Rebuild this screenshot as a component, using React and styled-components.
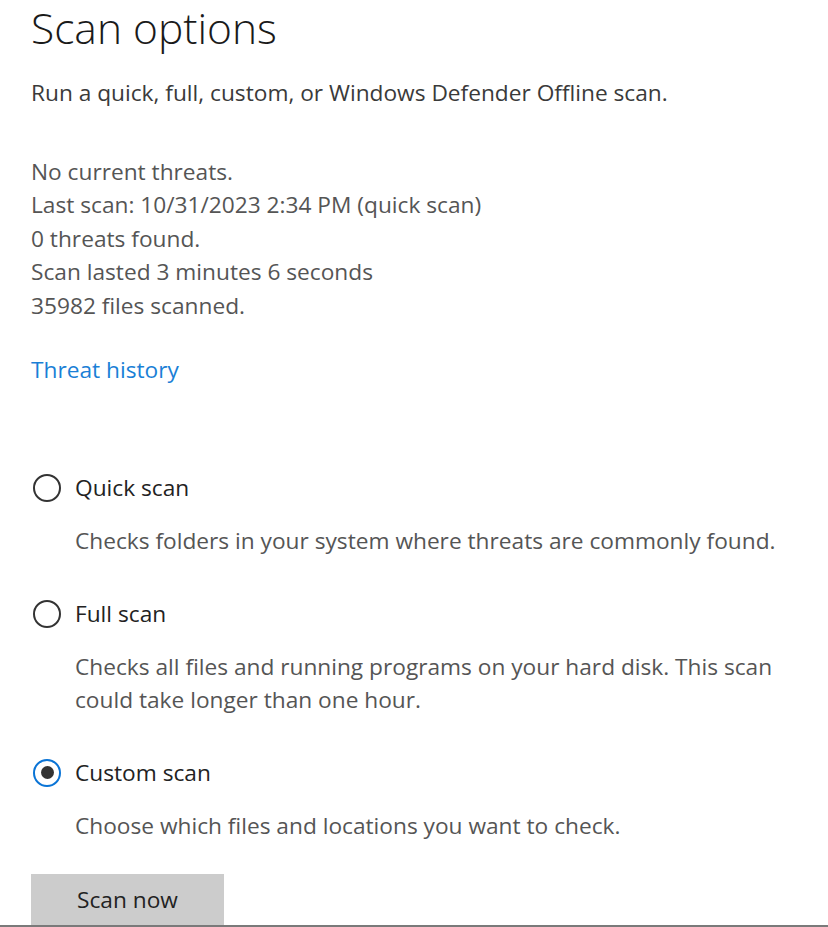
import React, { useState } from 'react';
import styled, { createGlobalStyle } from 'styled-components';

const GlobalStyle = createGlobalStyle`
    html, body {
        margin: 0;
        padding: 0;
        background: #ffffff;
    }
    body {
        font-family: "Open Sans", "Noto Sans", "Liberation Sans", sans-serif;
        color: #333333;
    }
`

const options = [
    {
        id: 'quick',
        label: 'Quick scan',
        description: 'Checks folders in your system where threats are commonly found.',
    },
    {
        id: 'full',
        label: 'Full scan',
        description: 'Checks all files and running programs on your hard disk. This scan could take longer than one hour.',
    },
    {
        id: 'custom',
        label: 'Custom scan',
        description: 'Choose which files and locations you want to check.',
    },
]

const statusLines = [
    'No current threats.',
    'Last scan: 10/31/2023 2:34 PM (quick scan)',
    '0 threats found.',
    'Scan lasted 3 minutes 6 seconds',
    '35982 files scanned.',
]

const App = () => {
    const [selected, setSelected] = useState('custom');

    return (
        <Page>
            <GlobalStyle />
            <Content>
                <Title>Scan options</Title>
                <Subtitle>Run a quick, full, custom, or Windows Defender Offline scan.</Subtitle>

                <Status>
                    {statusLines.map(line => <StatusLine key={line}>{line}</StatusLine>)}
                </Status>

                <HistoryLink href="#">Threat history</HistoryLink>

                <OptionList>
                    {options.map(opt => (
                        <Option key={opt.id}>
                            <RadioRow onClick={() => setSelected(opt.id)}>
                                <Radio checked={selected === opt.id}>
                                    {selected === opt.id && <Dot />}
                                </Radio>
                                <OptionLabel>{opt.label}</OptionLabel>
                            </RadioRow>
                            <OptionDescription>{opt.description}</OptionDescription>
                        </Option>
                    ))}
                </OptionList>

                <ScanButton>Scan now</ScanButton>
            </Content>
        </Page>
    )
}

const Page = styled.div`
    height: 925px;
    overflow: hidden;
    border-bottom: 2px solid #7a7a7a;
    background: #ffffff;
`

const Content = styled.div`
    padding: 2px 0 0 31px;
    display: flex;
    flex-direction: column;
    align-items: flex-start;
`

const Title = styled.h1`
    margin: 0;
    font-size: 42.5px;
    font-weight: 300;
    line-height: 52px;
    color: #1a1a1a;
`

const Subtitle = styled.p`
    margin: 21.5px 0 0;
    font-size: 22.7px;
    line-height: 33px;
    color: #3a3a3a;
`

const Status = styled.div`
    margin-top: 46px;
    display: flex;
    flex-direction: column;
`

const StatusLine = styled.div`
    font-size: 22.7px;
    line-height: 33.5px;
    color: #555555;
`

const HistoryLink = styled.a`
    margin-top: 30.5px;
    font-size: 22.7px;
    line-height: 33px;
    color: #1a7fd6;
    text-decoration: none;
`

const OptionList = styled.div`
    margin-top: 85.5px;
    display: flex;
    flex-direction: column;
    gap: 40px;
`

const Option = styled.div`
    display: flex;
    flex-direction: column;
`

const RadioRow = styled.label`
    display: flex;
    align-items: center;
    gap: 14px;
    height: 33px;
    padding-left: 2px;
    cursor: pointer;
`

const Radio = styled.span`
    box-sizing: border-box;
    width: 28px;
    height: 28px;
    border-radius: 50%;
    border: 2.5px solid ${p => p.checked ? '#0a74d6' : '#333333'};
    display: flex;
    align-items: center;
    justify-content: center;
`

const Dot = styled.span`
    width: 13px;
    height: 13px;
    border-radius: 50%;
    background: #333333;
`

const OptionLabel = styled.span`
    font-size: 22.7px;
    line-height: 33px;
    color: #222222;
`

const OptionDescription = styled.p`
    margin: 20px 0 0 44px;
    max-width: 712px;
    font-size: 22.7px;
    line-height: 33px;
    color: #555555;
`

const ScanButton = styled.button`
    margin-top: 31.5px;
    width: 193px;
    height: 52px;
    border: none;
    background: #cccccc;
    font-family: inherit;
    font-size: 22.7px;
    color: #222222;
    padding: 0;
    cursor: pointer;
`

export default App;
